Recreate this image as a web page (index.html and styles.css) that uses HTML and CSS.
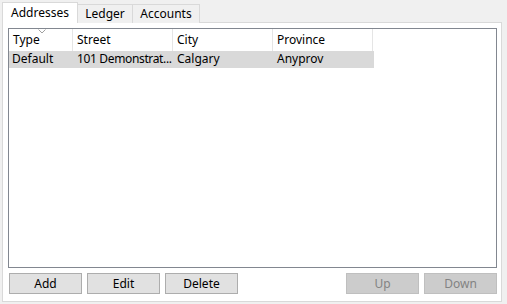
FILE: index.html
```html
<!DOCTYPE html>
<html lang="en">
<head>
	<meta charset="UTF-8">
	<title>Addresses</title>
	<link rel="stylesheet" href="styles.css">
</head>
<body>
	<div class="tabs">
		<div class="tab active">Addresses</div>
		<div class="tab">Ledger</div>
		<div class="tab">Accounts</div>
	</div>
	<div class="panel">
		<div class="list">
			<div class="row head">
				<div class="cell c1">Type<svg class="sort" width="8" height="5" viewBox="0 0 8 5"><polyline points="0.5,0.5 4,4 7.5,0.5" fill="none" stroke="#a0a0a0" stroke-width="1"/></svg></div>
				<div class="cell c2">Street</div>
				<div class="cell c3">City</div>
				<div class="cell c4">Province</div>
			</div>
			<div class="row sel">
				<div class="cell c1">Default</div>
				<div class="cell c2 tight">101 Demonstrat...</div>
				<div class="cell c3">Calgary</div>
				<div class="cell c4">Anyprov</div>
			</div>
		</div>
		<div class="buttons">
			<button class="btn">Add</button>
			<button class="btn">Edit</button>
			<button class="btn">Delete</button>
			<span class="spacer"></span>
			<button class="btn" disabled>Up</button>
			<button class="btn" disabled>Down</button>
		</div>
	</div>
</body>
</html>
```
FILE: styles.css
```css
*{
	margin:0;
	padding:0;
	box-sizing:border-box;
}

body{
	background:#f0f0f0;
	font-family:"Noto Sans","Open Sans",sans-serif;
	font-size:12px;
	color:#000;
	padding:2px 0 0 2px;
	width:507px;
	height:304px;
}

.tabs{
	display:flex;
	align-items:flex-end;
	height:21px;
	position:relative;
	z-index:1;
}

.tab{
	height:19px;
	border:1px solid #d9d9d9;
	border-bottom:none;
	border-left:none;
	background:#f0f0f0;
	line-height:18px;
	text-align:center;
}

.tab.active{
	height:21px;
	width:76px;
	border-left:1px solid #d9d9d9;
	background:#fff;
	line-height:20px;
}

.tab:nth-child(2){ width:55px; }
.tab:nth-child(3){ width:67px; }

.panel{
	width:500px;
	height:280px;
	margin-top:-1px;
	background:#fff;
	border:1px solid #d9d9d9;
	padding:5px 4px 0 5px;
}

.list{
	height:240px;
	border:1px solid #828790;
	background:#fff;
}

.row{
	display:flex;
	width:365px;
}

.head{
	height:22px;
	line-height:21px;
}

.head .cell{
	border-right:1px solid #e5e5e5;
	position:relative;
}

.sel{
	height:17px;
	line-height:16px;
	background:#d9d9d9;
}

.cell{
	padding-left:4px;
	white-space:nowrap;
	overflow:hidden;
}

.c1{ width:64px; }
.c2{ width:100px; }
.c3{ width:100px; }
.c4{ width:100px; }
.sel .c1{ padding-left:3px; }

.tight{ letter-spacing:-0.35px; }

.sort{
	position:absolute;
	left:29px;
	top:0;
	display:block;
}

.buttons{
	display:flex;
	gap:5px;
	margin-top:5px;
	padding-left:1px;
}

.spacer{ flex:1; }

.btn{
	width:73px;
	height:21px;
	background:#e1e1e1;
	border:1px solid #adadad;
	font:inherit;
	color:#000;
}

.btn:disabled{
	background:#cccccc;
	border-color:#bfbfbf;
	color:#838383;
}
```
